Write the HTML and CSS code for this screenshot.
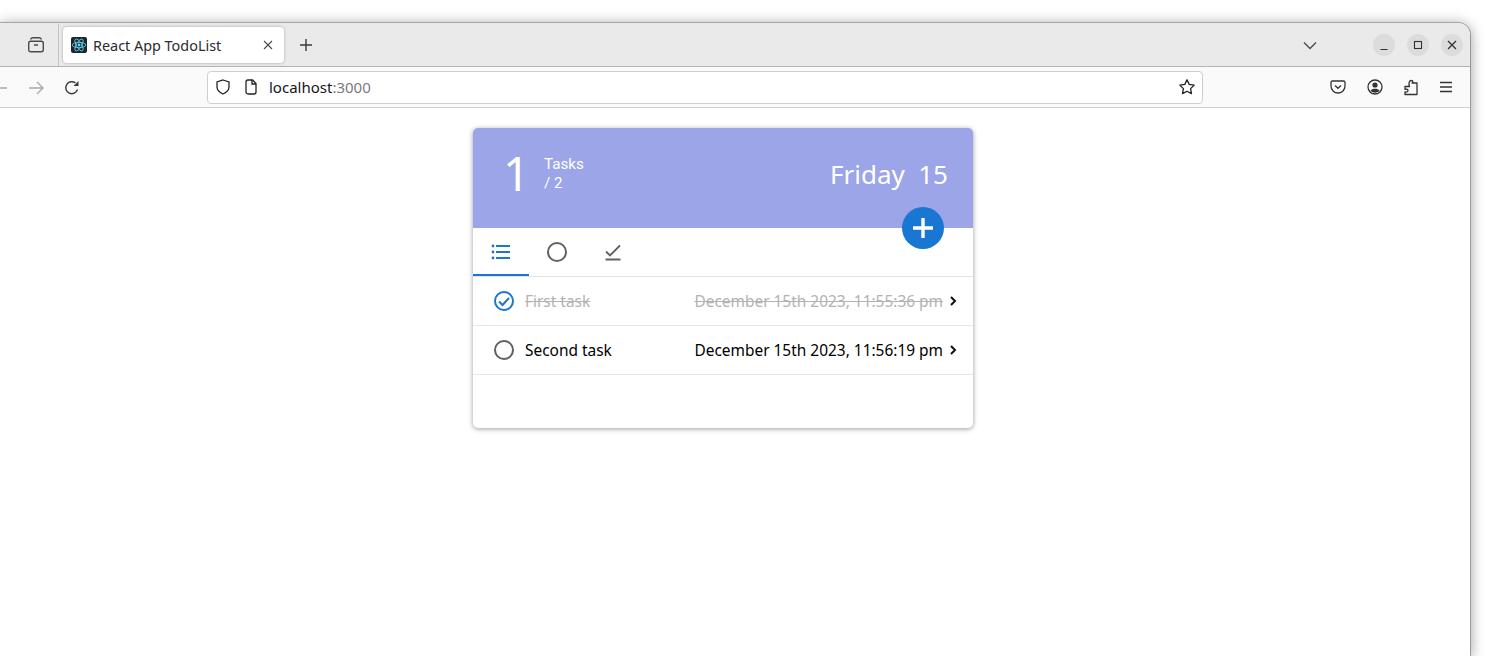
FILE: index.html
```html
<!doctype html>
<html lang="en">
<head>
	<meta charset="UTF-8">
	<title>React App TodoList</title>
	<link rel="stylesheet" href="styles.css">
</head>
<body>
	<div class="window">
		<div class="tabbar">
			<div class="tabbar-left">
				<svg class="ico" width="18" height="18" viewBox="0 0 18 18" fill="none" stroke="#4a4a4f" stroke-width="1.4"><path d="M3.5 3.5c.5-1.300 1.300-1.800 2.500-1.800h6c1.200 0 2 .5 2.500 1.800"/><rect x="1.700" y="5.300" width="14.600" height="10.500" rx="2"/><path d="M7 9h4"/></svg>
			</div>
			<div class="tab">
				<svg class="favicon" width="16" height="16" viewBox="0 0 16 16"><rect width="16" height="16" rx="2" fill="#20232a"/><g fill="none" stroke="#61dafb" stroke-width=".8"><ellipse cx="8" cy="8" rx="6.800" ry="2.700"/><ellipse cx="8" cy="8" rx="6.800" ry="2.700" transform="rotate(60 8 8)"/><ellipse cx="8" cy="8" rx="6.800" ry="2.700" transform="rotate(120 8 8)"/></g><circle cx="8" cy="8" r="1.400" fill="#61dafb"/></svg>
				<span class="tab-title">React App TodoList</span>
				<svg width="10" height="10" viewBox="0 0 10 10" stroke="#4a4a4f" stroke-width="1.100"><path d="M1 1l8 8M9 1l-8 8"/></svg>
			</div>
			<svg class="newtab" width="14" height="14" viewBox="0 0 14 14" stroke="#3a3a3f" stroke-width="1.400"><path d="M7 1v12M1 7h12"/></svg>
			<svg class="tabs-down" width="14" height="9" viewBox="0 0 14 9" fill="none" stroke="#4a4a4f" stroke-width="1.300"><path d="M1 1.500l6 6 6-6"/></svg>
			<div class="winbtns">
				<span class="winbtn"><svg width="10" height="10" viewBox="0 0 10 10" stroke="#333" stroke-width="1.100"><path d="M1.500 9.500h7"/></svg></span>
				<span class="winbtn"><svg width="10" height="10" viewBox="0 0 10 10" fill="none" stroke="#333" stroke-width="1.100"><rect x="1.500" y="1.500" width="7" height="7"/></svg></span>
				<span class="winbtn"><svg width="10" height="10" viewBox="0 0 10 10" stroke="#333" stroke-width="1.300"><path d="M1 1l8 8M9 1l-8 8"/></svg></span>
			</div>
		</div>
		<div class="navbar">
			<svg class="back" width="16" height="16" viewBox="0 0 16 16" fill="none" stroke="#a8a8aa" stroke-width="1.300"><path d="M1 8h14"/></svg>
			<svg class="forward" width="16" height="16" viewBox="0 0 16 16" fill="none" stroke="#a8a8aa" stroke-width="1.300"><path d="M1 8h14M9 2l6 6-6 6"/></svg>
			<svg class="reload" width="16" height="16" viewBox="0 0 16 16" fill="none" stroke="#3a3a3f" stroke-width="1.400"><path d="M13.500 9.500A6 6 0 1 1 11.500 3"/><path d="M14.500 1v5h-5z" fill="#3a3a3f" stroke="none"/></svg>
			<div class="urlbar">
				<svg width="16" height="16" viewBox="0 0 16 16" fill="none" stroke="#222" stroke-width="1.300"><path d="M8 1l6 2v5c0 3.500-2.500 5.500-6 7-3.500-1.500-6-3.500-6-7V3z"/></svg>
				<svg class="pageico" width="14" height="16" viewBox="0 0 14 16" fill="none" stroke="#222" stroke-width="1.300"><path d="M2 3a2 2 0 0 1 2-2h4.500L12 4.500V13a2 2 0 0 1-2 2H4a2 2 0 0 1-2-2z"/><path d="M8 1v4h4"/></svg>
				<span class="url">localhost<span class="url-port">:3000</span></span>
				<svg class="star" width="18" height="18" viewBox="0 0 18 18" fill="none" stroke="#222" stroke-width="1.300" stroke-linejoin="round"><path d="M9 1.800l2.200 4.600 5 .7-3.600 3.500.9 5L9 13.200l-4.500 2.400.9-5L1.800 7.100l5-.7z"/></svg>
			</div>
			<div class="nav-right">
				<svg width="16" height="16" viewBox="0 0 16 16" fill="none" stroke="#333" stroke-width="1.300"><path d="M2.500 2h11A1.500 1.500 0 0 1 15 3.500V7a7 7 0 0 1-14 0V3.500A1.500 1.500 0 0 1 2.500 2z"/><path d="M5 6.500l3 2.800 3-2.800"/></svg>
				<svg width="16" height="16" viewBox="0 0 16 16" fill="none" stroke="#333" stroke-width="1.300"><circle cx="8" cy="8" r="7"/><circle cx="8" cy="6" r="2.600" fill="#333" stroke="none"/><path d="M3.500 11.500c1-1.300 2.500-1.800 4.500-1.800s3.500.5 4.500 1.800c-1 1.400-2.500 2.200-4.500 2.200s-3.500-.8-4.500-2.200z" fill="#333" stroke="none"/></svg>
				<svg width="16" height="17" viewBox="0 0 16 17" fill="none" stroke="#333" stroke-width="1.300" stroke-linejoin="round"><path d="M9 4h5v11.500H2V13c2 .5 3-.5 3-1.500S4 9.700 2 10.300V7.500h4.500C5.500 5 6 1.500 8 1.500S10.500 3 9 4z"/></svg>
				<svg width="14" height="12" viewBox="0 0 14 12" stroke="#333" stroke-width="1.300"><path d="M1 1.500h12M1 6h12M1 10.500h12"/></svg>
			</div>
		</div>
		<div class="page">
			<div class="card">
				<div class="card-head">
					<div class="count">
						<span class="count-num">1</span>
						<div class="count-label">
							<div>Tasks</div>
							<div>/ 2</div>
						</div>
					</div>
					<div class="today">Friday&nbsp; 15</div>
				</div>
				<button class="add">
					<svg width="22" height="22" viewBox="0 0 22 22" stroke="#fff" stroke-width="3.400"><path d="M11 1v20M1 11h20"/></svg>
				</button>
				<div class="filters">
					<div class="filter active">
						<svg width="20" height="16" viewBox="0 0 20 16" fill="#1976d2"><circle cx="2" cy="2" r="1.400"/><circle cx="2" cy="8" r="1.400"/><circle cx="2" cy="14" r="1.400"/><rect x="5" y="1" width="14" height="2"/><rect x="5" y="7" width="14" height="2"/><rect x="5" y="13" width="14" height="2"/></svg>
					</div>
					<div class="filter">
						<svg width="22" height="22" viewBox="0 0 22 22" fill="none" stroke="#616161" stroke-width="2"><circle cx="11" cy="11" r="9"/></svg>
					</div>
					<div class="filter">
						<svg width="18" height="18" viewBox="0 0 18 18" fill="none" stroke="#616161" stroke-width="1.800"><path d="M2 8.500l4 4L16 2.500"/><path d="M1.500 16.500h15" stroke-width="2"/></svg>
					</div>
				</div>
				<div class="task done">
					<svg class="check" width="22" height="22" viewBox="0 0 22 22" fill="none" stroke="#1976d2" stroke-width="2"><circle cx="11" cy="11" r="9"/><path d="M6 11.500l3.500 3.500 6.500-7"/></svg>
					<span class="task-name">First task</span>
					<span class="task-date">December 15th 2023, 11:55:36 pm</span>
					<svg class="more" width="8" height="10" viewBox="0 0 8 10" fill="none" stroke="#111" stroke-width="2"><path d="M2 1l4 4-4 4"/></svg>
				</div>
				<div class="task">
					<svg class="check" width="22" height="22" viewBox="0 0 22 22" fill="none" stroke="#616161" stroke-width="2"><circle cx="11" cy="11" r="9"/></svg>
					<span class="task-name">Second task</span>
					<span class="task-date">December 15th 2023, 11:56:19 pm</span>
					<svg class="more" width="8" height="10" viewBox="0 0 8 10" fill="none" stroke="#111" stroke-width="2"><path d="M2 1l4 4-4 4"/></svg>
				</div>
			</div>
		</div>
	</div>
</body>
</html>
```
FILE: styles.css
```css
*{
	margin: 0;
	padding: 0;
	box-sizing: border-box;
}
html,body{
	height: 100%;
	background: #fff;
	overflow: hidden;
}
body{
	font-family: "Noto Sans", "Open Sans", sans-serif;
	padding: 22px 24px 0 0;
}
svg{
	display: block;
	flex: none;
}
.window{
	height: 634px;
	border-radius: 0 13px 0 0;
	border-top: 1px solid #a5a5a5;
	border-right: 1px solid #9a9a9a;
	box-shadow: 0 2px 14px rgba(0,0,0,.38);
	overflow: hidden;
	background: #fff;
}
.tabbar{
	height: 44px;
	padding-top: 1px;
	background: #eaeaea;
	border-bottom: 1px solid #b4b4b4;
	display: flex;
	align-items: center;
}
.tabbar-left{
	width: 59px;
	height: 42px;
	border-right: 1px solid #c4c4c4;
	display: flex;
	align-items: center;
	padding-left: 27px;
}
.tab{
	width: 221px;
	height: 36px;
	margin-left: 4px;
	background: #fff;
	border-radius: 4px;
	box-shadow: 0 0 3px rgba(0,0,0,.3);
	display: flex;
	align-items: center;
	padding: 0 11px 0 8px;
}
.favicon{
	margin-right: 6px;
}
.tab-title{
	flex: 1;
	font-size: 14.4px;
	color: #2b2b33;
}
.newtab{
	margin-left: 15px;
}
.tabs-down{
	margin-left: auto;
}
.winbtns{
	display: flex;
	gap: 12px;
	margin: 0 7px 0 56px;
}
.winbtn{
	width: 22px;
	height: 22px;
	border-radius: 50%;
	background: #dcdcdc;
	display: flex;
	align-items: center;
	justify-content: center;
}
.navbar{
	height: 41px;
	background: #fafafa;
	border-bottom: 1px solid #cfcfcf;
	display: flex;
	align-items: center;
}
.back{
	margin: 2px 0 0 -8px;
}
.forward{
	margin: 2px 0 0 20px;
}
.reload{
	margin: 2px 0 0 20px;
}
.urlbar{
	width: 996px;
	height: 33px;
	margin-left: 127px;
	background: #fff;
	border: 1px solid #cfcfd3;
	border-radius: 4px;
	display: flex;
	align-items: center;
	padding: 0 6px 0 7px;
}
.pageico{
	margin-left: 13px;
}
.url{
	margin-left: 11px;
	font-size: 15px;
	color: #15141a;
}
.url-port{
	color: #7a7a80;
}
.star{
	margin-left: auto;
}
.nav-right{
	display: flex;
	align-items: center;
	gap: 20px;
	margin-left: 127px;
}
.nav-right svg:first-child{
	margin-right: 1px;
}
.page{
	display: flex;
	justify-content: center;
	padding-top: 20px;
	width: 1446px;
}
.card{
	width: 500px;
	height: 300px;
	position: relative;
	border-radius: 5px;
	background: #fff;
	box-shadow: 0 1px 5px rgba(0,0,0,.4);
	overflow: hidden;
}
.card-head{
	height: 100px;
	background: #9ba5e8;
	color: #fff;
	display: flex;
	align-items: center;
	justify-content: space-between;
	padding: 0 25px 9px 30px;
}
.count{
	display: flex;
	align-items: center;
	gap: 14px;
}
.count-num{
	font-size: 47px;
	line-height: 1;
	width: 27px;
}
.count-label{
	font-family: Roboto, sans-serif;
	font-size: 15.2px;
	line-height: 19px;
}
.today{
	font-size: 26px;
}
.add{
	position: absolute;
	left: 429px;
	top: 79px;
	width: 42px;
	height: 42px;
	border: 0;
	border-radius: 50%;
	background: #1976d2;
	display: flex;
	align-items: center;
	justify-content: center;
}
.filters{
	height: 49px;
	display: flex;
	border-bottom: 1px solid #e4e4e4;
}
.filter{
	width: 56px;
	height: 48px;
	display: flex;
	align-items: center;
	justify-content: center;
}
.filter.active{
	border-bottom: 2px solid #1976d2;
	padding-top: 2px;
}
.task{
	height: 49px;
	display: flex;
	align-items: center;
	padding: 0 16px 0 20px;
	border-bottom: 1px solid #e8e8e8;
	font-size: 15.45px;
	color: #000;
}
.task-name{
	margin-left: 10px;
	flex: 1;
}
.task-date{
	margin-right: 6px;
}
.done .task-name,.done .task-date{
	color: #b3b3b3;
	text-decoration: line-through;
}
```
